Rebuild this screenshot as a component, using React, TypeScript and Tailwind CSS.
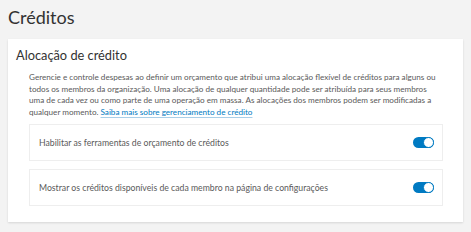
import React from 'react';

const Toggle: React.FC = () => (
  <div className="relative w-[21px] h-[11px] rounded-full bg-[#007ac2]">
    <div className="absolute right-0 top-0 w-[11px] h-[11px] rounded-full bg-white border-[1.5px] border-[#007ac2]"></div>
  </div>
);

export default function App() {
  return (
    <div className="w-[471px] h-[232px] bg-[#f3f3f3] px-2 pt-[4px] text-[#323232]" style={{ fontFamily: 'Lato, "Noto Sans", sans-serif' }}>
      <h1 className="text-[18px] leading-[26px] h-[35px] text-[#323232]">Créditos</h1>

      {/* Card */}
      <div className="bg-white w-[455px] h-[183px] pl-2 pr-5 pt-[7px] shadow-[0_1px_2px_rgba(0,0,0,0.12)]">
        <h2 className="text-[12.8px] leading-[18px] text-[#323232]">Alocação de crédito</h2>
        <div className="pl-[13px] mt-[8px]">
          <p className="text-[8.15px] leading-[11.7px] text-[#5a5a5a] whitespace-nowrap">
            Gerencie e controle despesas ao definir um orçamento que atribui uma alocação flexível de créditos para alguns ou
            <br />
            todos os membros da organização. Uma alocação de qualquer quantidade pode ser atribuída para seus membros
            <br />
            uma de cada vez ou como parte de uma operação em massa. As alocações dos membros podem ser modificadas a
            <br />
            qualquer momento. <span className="text-[#007ac2] underline decoration-[#a9cfe8] underline-offset-2">Saiba mais sobre gerenciamento de crédito</span>
          </p>

          <div className="mt-[5px] flex flex-col gap-[8px]">
            <div className="h-[37px] border border-[#eeeeee] flex items-center justify-between pl-[9px] pr-[8px]">
              <span className="text-[8.7px] text-[#5a5a5a]">Habilitar as ferramentas de orçamento de créditos</span>
              <Toggle />
            </div>
            <div className="h-[37px] border border-[#eeeeee] flex items-center justify-between pl-[9px] pr-[8px]">
              <span className="text-[8.7px] text-[#5a5a5a]">Mostrar os créditos disponíveis de cada membro na página de configurações</span>
              <Toggle />
            </div>
          </div>
        </div>
      </div>
    </div>
  );
}
